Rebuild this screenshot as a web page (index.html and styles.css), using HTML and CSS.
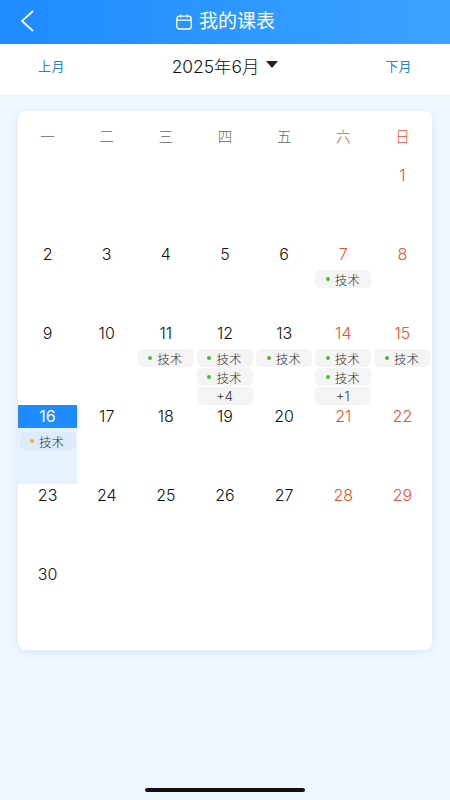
FILE: index.html
```html
<!DOCTYPE html>
<html lang="zh">
<head>
<meta charset="utf-8">
<title>我的课表</title>
<link rel="stylesheet" href="styles.css">
</head>
<body>
<div class="app">
  <header class="header">
    <svg class="back" width="14" height="22" viewBox="0 0 14 22"><path d="M13 1 L2 11 L13 21" fill="none" stroke="#fff" stroke-width="1.7"/></svg>
    <div class="title">
      <svg width="16" height="16" viewBox="0 0 16 16"><rect x="0.8" y="2.2" width="14.4" height="12.8" rx="2.6" fill="none" stroke="#fff" stroke-width="1.3"/><path d="M1 6.2H15M4.6 0.6V3.4M11.4 0.6V3.4" fill="none" stroke="#fff" stroke-width="1.3"/></svg>
      <span>我的课表</span>
    </div>
  </header>
  <nav class="monthbar">
    <span class="navlink">上月</span>
    <div class="month"><span>2025年6月</span><i class="caret"></i></div>
    <span class="navlink">下月</span>
  </nav>
  <main class="card">
    <div class="weekdays">
      <span>一</span><span>二</span><span>三</span><span>四</span><span>五</span><span class="red">六</span><span class="red">日</span>
    </div>
    <div class="grid">
      <div class="cell"></div><div class="cell"></div><div class="cell"></div><div class="cell"></div><div class="cell"></div><div class="cell"></div>
      <div class="cell"><div class="date red">1</div></div>

      <div class="cell"><div class="date">2</div></div>
      <div class="cell"><div class="date">3</div></div>
      <div class="cell"><div class="date">4</div></div>
      <div class="cell"><div class="date">5</div></div>
      <div class="cell"><div class="date">6</div></div>
      <div class="cell"><div class="date red">7</div><div class="chip"><i class="dot"></i>技术</div></div>
      <div class="cell"><div class="date red">8</div></div>

      <div class="cell"><div class="date">9</div></div>
      <div class="cell"><div class="date">10</div></div>
      <div class="cell"><div class="date">11</div><div class="chip"><i class="dot"></i>技术</div></div>
      <div class="cell"><div class="date">12</div><div class="chip"><i class="dot"></i>技术</div><div class="chip"><i class="dot"></i>技术</div><div class="chip more">+4</div></div>
      <div class="cell"><div class="date">13</div><div class="chip"><i class="dot"></i>技术</div></div>
      <div class="cell"><div class="date red">14</div><div class="chip"><i class="dot"></i>技术</div><div class="chip"><i class="dot"></i>技术</div><div class="chip more">+1</div></div>
      <div class="cell"><div class="date red">15</div><div class="chip"><i class="dot"></i>技术</div></div>

      <div class="cell today"><div class="date">16</div><div class="chip"><i class="dot orange"></i>技术</div></div>
      <div class="cell"><div class="date">17</div></div>
      <div class="cell"><div class="date">18</div></div>
      <div class="cell"><div class="date">19</div></div>
      <div class="cell"><div class="date">20</div></div>
      <div class="cell"><div class="date red">21</div></div>
      <div class="cell"><div class="date red">22</div></div>

      <div class="cell"><div class="date">23</div></div>
      <div class="cell"><div class="date">24</div></div>
      <div class="cell"><div class="date">25</div></div>
      <div class="cell"><div class="date">26</div></div>
      <div class="cell"><div class="date">27</div></div>
      <div class="cell"><div class="date red">28</div></div>
      <div class="cell"><div class="date red">29</div></div>

      <div class="cell"><div class="date">30</div></div>
    </div>
  </main>
  <div class="homebar"></div>
</div>
</body>
</html>
```
FILE: styles.css
```css
* { box-sizing: border-box; }
html, body { margin: 0; height: 100%; }
body {
  background: #eef6ff;
  font-family: "Inter", "Noto Sans CJK SC", sans-serif;
  color: #222;
}
.app {
  width: 450px;
  height: 800px;
  display: flex;
  flex-direction: column;
  position: relative;
  overflow: hidden;
}
.header {
  height: 44px;
  background: linear-gradient(90deg, #1e8bff, #3ba3ff);
  display: flex;
  align-items: center;
  justify-content: center;
  position: relative;
  color: #fff;
}
.back { position: absolute; left: 20px; top: 10px; }
.title {
  display: flex;
  align-items: center;
  gap: 7px;
  font-size: 19px;
  line-height: 24px;
  padding-left: 1px;
}
.monthbar {
  height: 51px;
  padding: 0 38px 8px;
  background: #fff;
  display: flex;
  align-items: center;
  justify-content: space-between;
  box-shadow: 0 1px 2px rgba(40, 90, 160, 0.05);
}
.navlink {
  font-size: 13px;
  letter-spacing: 0.4px;
  color: #2a80d8;
  font-family: "Noto Sans CJK SC", sans-serif;
}
.month {
  display: flex;
  align-items: center;
  gap: 7px;
  font-size: 17.4px;
  font-weight: 300;
  color: #111;
}
.caret {
  width: 0;
  height: 0;
  border-left: 6px solid transparent;
  border-right: 6px solid transparent;
  border-top: 7px solid #222;
  margin-top: -3px;
}
.card {
  width: 414px;
  height: 539px;
  margin: 16px 18px 0;
  background: #fff;
  border-radius: 8px;
  box-shadow: 0 2px 8px rgba(60, 100, 160, 0.1);
}
.weekdays {
  height: 53px;
  display: grid;
  grid-template-columns: repeat(7, 1fr);
  text-align: center;
  font-size: 14.5px;
  font-weight: 300;
  line-height: 51px;
  color: #666;
}
.weekdays span { display: block; height: 53px; }
.red { color: #ea4f33 !important; }
.grid {
  display: grid;
  grid-template-columns: repeat(7, 1fr);
  grid-auto-rows: minmax(79px, auto);
}
.cell { min-width: 0; }
.date {
  height: 23px;
  line-height: 23px;
  margin-bottom: 4px;
  text-align: center;
  font-size: 16px;
  font-weight: 300;
  color: #111;
}
.chip {
  height: 18px;
  margin: 0 1.5px 1px;
  border-radius: 5px;
  background: #f4f4f5;
  display: flex;
  align-items: center;
  justify-content: center;
  gap: 5px;
  font-size: 12.5px;
  font-weight: 300;
  color: #333;
  padding-right: 1px;
}
.chip.more { margin-bottom: 0; font-size: 13px; }
.dot {
  width: 4px;
  height: 4px;
  border-radius: 50%;
  background: #4cbb2c;
  flex: none;
}
.dot.orange { background: #f5a93c; }
.today { background: #e6f2fe; }
.today .date { background: #1e8bff; color: #fff; font-weight: 400; }
.today .chip { background: #dcebfa; }
.homebar {
  position: absolute;
  left: 145px;
  bottom: 8px;
  width: 160px;
  height: 4px;
  border-radius: 2px;
  background: #111;
}
```
